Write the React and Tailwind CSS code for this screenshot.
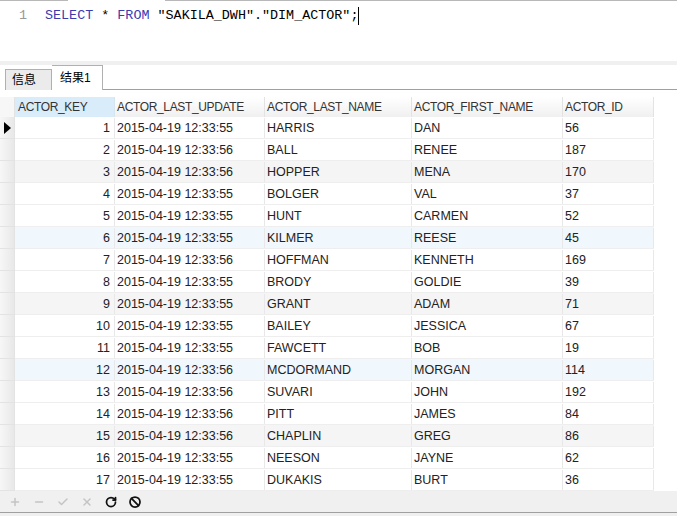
import { Plus, Minus, Check, X, RotateCw, Ban } from "lucide-react";

const rows = [
  [1, "2015-04-19 12:33:55", "HARRIS", "DAN", 56],
  [2, "2015-04-19 12:33:56", "BALL", "RENEE", 187],
  [3, "2015-04-19 12:33:56", "HOPPER", "MENA", 170],
  [4, "2015-04-19 12:33:55", "BOLGER", "VAL", 37],
  [5, "2015-04-19 12:33:55", "HUNT", "CARMEN", 52],
  [6, "2015-04-19 12:33:55", "KILMER", "REESE", 45],
  [7, "2015-04-19 12:33:56", "HOFFMAN", "KENNETH", 169],
  [8, "2015-04-19 12:33:55", "BRODY", "GOLDIE", 39],
  [9, "2015-04-19 12:33:55", "GRANT", "ADAM", 71],
  [10, "2015-04-19 12:33:55", "BAILEY", "JESSICA", 67],
  [11, "2015-04-19 12:33:55", "FAWCETT", "BOB", 19],
  [12, "2015-04-19 12:33:56", "MCDORMAND", "MORGAN", 114],
  [13, "2015-04-19 12:33:56", "SUVARI", "JOHN", 192],
  [14, "2015-04-19 12:33:56", "PITT", "JAMES", 84],
  [15, "2015-04-19 12:33:56", "CHAPLIN", "GREG", 86],
  [16, "2015-04-19 12:33:55", "NEESON", "JAYNE", 62],
  [17, "2015-04-19 12:33:55", "DUKAKIS", "BURT", 36],
];

// every third row is tinted, alternating grey / pale blue
function rowBg(i) {
  if (i % 3 !== 2) return "bg-white";
  return Math.floor(i / 3) % 2 === 0 ? "bg-[#f5f5f5]" : "bg-[#f0f7fd]";
}

export default function App() {
  return (
    <div className="w-[677px] h-[516px] bg-white overflow-hidden flex flex-col font-['Liberation_Sans','Noto_Sans_CJK_SC',sans-serif] text-[12px] text-[#222]">
      {/* editor */}
      <div className="flex h-px">
        <div className="w-[68px] bg-[#b8b8b8]" />
        <div className="w-[97px]" />
        <div className="flex-1 bg-[#b8b8b8]" />
      </div>
      <div className="h-[60px] flex items-start pt-[6px] font-['Liberation_Mono',monospace] text-[13.4px] leading-[18px]">
        <span className="w-[45px] pl-[19px] text-[#999]">1</span>
        <span className="text-[#3b3bb0]">SELECT</span>
        <span className="whitespace-pre text-black"> * </span>
        <span className="text-[#3b3bb0]">FROM</span>
        <span className="whitespace-pre text-black"> "SAKILA_DWH"."DIM_ACTOR";</span>
        <span className="w-px h-[18px] bg-black" />
      </div>
      <div className="h-[4px] bg-[#f0f0f0]" />
      {/* tabs */}
      <div className="h-[25px] flex items-end pl-[5px]">
        <div className="w-[47px] h-[21px] bg-[#ebebeb] border border-b-0 border-[#b0b0b0] flex items-center pl-[6px] text-[12px] text-black">信息</div>
        <div className="w-[51px] h-[25px] bg-white border border-b-0 border-l-0 border-[#b0b0b0] flex items-center pl-[8px] text-[12px] text-black">结果1</div>
        <div className="flex-1 h-px bg-[#a0a0a0]" />
      </div>
      <div className="h-[5px]" />
      {/* header */}
      <div className="flex h-[22px] text-[#333] tracking-[-0.35px] pt-[2px]">
        <div className="w-[15px] bg-[#f7f7f7] border-r border-[#e3e3e3]" />
        <div className="w-[100px] bg-[#d9ecfa] border-r border-[#d8e4ee] flex items-center pl-[3px]">ACTOR_KEY</div>
        <div className="w-[150px] bg-gradient-to-b from-white to-[#f0f0f0] border-r border-[#e3e3e3] flex items-center pl-[2px]">ACTOR_LAST_UPDATE</div>
        <div className="w-[147px] bg-gradient-to-b from-white to-[#f0f0f0] border-r border-[#e3e3e3] flex items-center pl-[2px]">ACTOR_LAST_NAME</div>
        <div className="w-[151px] bg-gradient-to-b from-white to-[#f0f0f0] border-r border-[#e3e3e3] flex items-center pl-[2px]">ACTOR_FIRST_NAME</div>
        <div className="w-[91px] bg-gradient-to-b from-white to-[#f0f0f0] border-r border-[#e3e3e3] flex items-center pl-[2px]">ACTOR_ID</div>
      </div>
      {/* rows */}
      <div className="flex flex-col text-[12.5px]">
        {rows.map((r, i) => (
          <div key={r[0]} className="flex h-[22px]">
            <div className="w-[15px] bg-gradient-to-r from-[#f7f7f7] to-[#e8e8e8] border-r border-b border-[#e3e3e3] flex items-center">
              {i === 0 && (
                <svg width="8" height="12" viewBox="0 0 8 12" className="ml-[4px]">
                  <path d="M0 0 L7 6 L0 12 Z" fill="#000" />
                </svg>
              )}
            </div>
            <div className={`w-[639px] flex border-b border-[#eeeeee] pt-[1px] ${rowBg(i)}`}>
              <div className="w-[100px] border-r border-[#e8e8e8] flex items-center justify-end pr-[4px]">{r[0]}</div>
              <div className="w-[150px] border-r border-[#e8e8e8] flex items-center pl-[2px]">{r[1]}</div>
              <div className="w-[147px] border-r border-[#e8e8e8] flex items-center pl-[2px]">{r[2]}</div>
              <div className="w-[151px] border-r border-[#e8e8e8] flex items-center pl-[2px]">{r[3]}</div>
              <div className="w-[91px] border-r border-[#e8e8e8] flex items-center pl-[2px]">{r[4]}</div>
            </div>
          </div>
        ))}
      </div>
      {/* toolbar */}
      <div className="h-[21px] bg-[#f0f0f0] flex items-center pl-[9px] gap-[12px]">
        <Plus size={12} strokeWidth={3} color="#c4c4c4" />
        <Minus size={12} strokeWidth={3} color="#c4c4c4" />
        <Check size={12} strokeWidth={3} color="#c4c4c4" />
        <X size={12} strokeWidth={3} color="#c4c4c4" />
        <RotateCw size={12} strokeWidth={3.5} color="#111" />
        <Ban size={12} strokeWidth={3.5} color="#111" />
      </div>
      <div className="h-px bg-[#a0a0a0]" />
      <div className="flex-1 bg-[#f0f0f0]" />
    </div>
  );
}
